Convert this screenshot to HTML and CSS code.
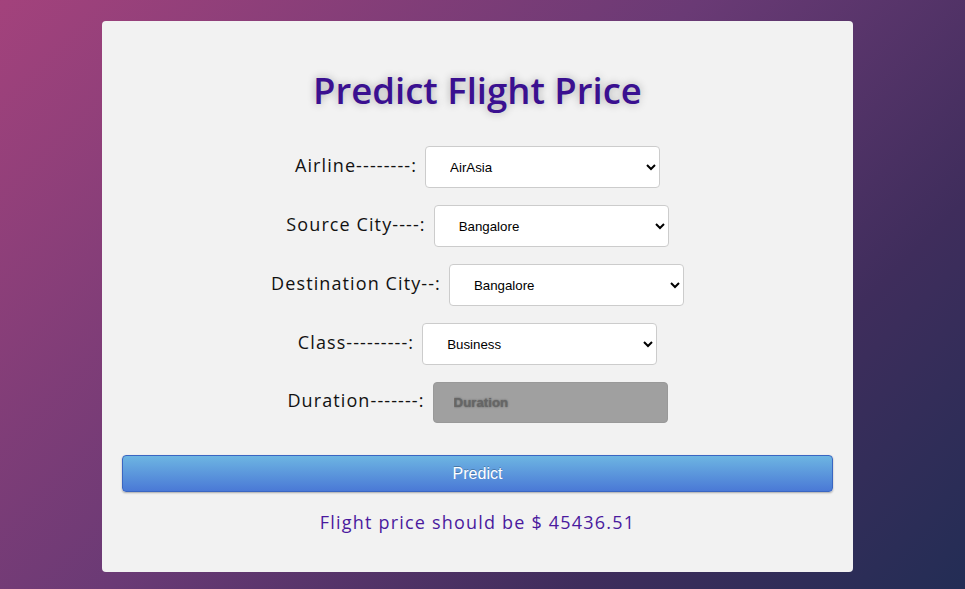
FILE: index.html
```html
<!DOCTYPE html>
<html>
<head>
<meta charset="utf-8">
<link rel="stylesheet" href="styles.css">
</head>
<body>
<div class="card">
  <h1 class="title">Predict Flight Price</h1>
  <form class="form">
    <div class="row">
      <label class="label">Airline--------:</label>
      <select class="field w235"><option>AirAsia</option></select>
    </div>
    <div class="row">
      <label class="label">Source City----:</label>
      <select class="field w235"><option>Bangalore</option></select>
    </div>
    <div class="row">
      <label class="label">Destination City--:</label>
      <select class="field w235"><option>Bangalore</option></select>
    </div>
    <div class="row">
      <label class="label">Class---------:</label>
      <select class="field w235"><option>Business</option></select>
    </div>
    <div class="row row-last">
      <label class="label">Duration-------:</label>
      <input class="field input" placeholder="Duration">
    </div>
    <button type="button" class="btn">Predict</button>
  </form>
  <p class="result">Flight price should be $ 45436.51</p>
</div>
</body>
</html>
```
FILE: styles.css
```css
html, body {
  margin: 0;
  height: 100%;
}
body {
  background: linear-gradient(135deg, #a3427c 0%, #6a3a75 45%, #3f2d5c 75%, #232d55 100%);
  padding-top: 21px;
  box-sizing: border-box;
  font-family: "Open Sans", sans-serif;
}
.card {
  margin-left: 102px;
  width: 751px;
  height: 551px;
  background: #f2f2f2;
  border-radius: 4px;
  box-sizing: border-box;
  padding: 0 20px;
}
.title {
  margin: 0;
  padding-top: 44px;
  text-align: center;
  font-size: 36.5px;
  font-weight: 600;
  color: #3a1090;
  text-shadow: 0 0 8px rgba(0, 0, 0, 0.3);
  line-height: 50px;
}
.form {
  margin-top: 31px;
  display: flex;
  flex-direction: column;
  align-items: center;
}
.row {
  display: flex;
  align-items: center;
  gap: 8px;
  height: 42px;
  margin-bottom: 17px;
}
.row-last {
  margin-top: -1px;
}
.label {
  font-size: 18px;
  letter-spacing: 1.1px;
  color: #111;
  margin-bottom: 4px;
}
.field {
  box-sizing: border-box;
  height: 42px;
  width: 235px;
  border: 1px solid #ccc;
  border-radius: 4px;
  background: #fff;
  font-family: Arial, "Liberation Sans", sans-serif;
  font-size: 13.3px;
  color: #000;
  padding-left: 20px;
}
.input {
  height: 41px;
  background: #a0a0a0;
  border-color: #999;
}
.input::placeholder {
  color: #666;
  text-shadow: 0 0 2px #555;
  font-weight: bold;
}
.btn {
  margin-top: 15px;
  width: 100%;
  height: 37px;
  border: 1px solid #3a66c2;
  border-radius: 4px;
  background: linear-gradient(#6db5e2, #4a79d6);
  box-shadow: 0 1px 2px rgba(0, 0, 0, 0.3);
  color: #fff;
  font-family: Arial, "Liberation Sans", sans-serif;
  font-size: 16px;
  text-shadow: 0 -1px 0 rgba(0, 0, 0, 0.25);
}
.result {
  margin: 18px 0 0;
  text-align: center;
  font-size: 18px;
  letter-spacing: 1.2px;
  color: #4a1a9e;
}
```
